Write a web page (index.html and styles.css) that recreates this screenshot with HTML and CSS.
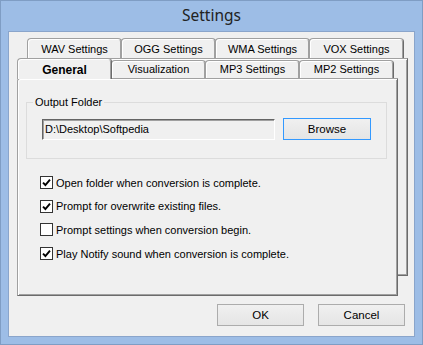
FILE: index.html
```html
<!DOCTYPE html>
<html lang="en">
<head>
  <meta charset="UTF-8">
  <title>Settings</title>
  <link rel="stylesheet" href="styles.css">
</head>
<body>
  <div class="window">
    <div class="titlebar">Settings</div>

    <div class="client">
      <div class="tabrow back">
        <div class="tab">WAV Settings</div>
        <div class="tab">OGG Settings</div>
        <div class="tab">WMA Settings</div>
        <div class="tab">VOX Settings</div>
      </div>
      <div class="tabrow front">
        <div class="tab active">General</div>
        <div class="tab">Visualization</div>
        <div class="tab">MP3 Settings</div>
        <div class="tab">MP2 Settings</div>
      </div>

      <div class="panel">
        <fieldset class="group">
          <legend>Output Folder</legend>
          <div class="pathrow">
            <div class="path">D:\Desktop\Softpedia</div>
            <button class="btn browse">Browse</button>
          </div>
        </fieldset>

        <div class="options">
          <div class="option">
            <span class="check"><svg viewBox="0 0 11 11"><path d="M2 5.6 L4.4 8 L9 2.6"/></svg></span>
            Open folder when conversion is complete.
          </div>
          <div class="option">
            <span class="check"><svg viewBox="0 0 11 11"><path d="M2 5.6 L4.4 8 L9 2.6"/></svg></span>
            Prompt for overwrite existing files.
          </div>
          <div class="option">
            <span class="check"></span>
            Prompt settings when conversion begin.
          </div>
          <div class="option">
            <span class="check"><svg viewBox="0 0 11 11"><path d="M2 5.6 L4.4 8 L9 2.6"/></svg></span>
            Play Notify sound when conversion is complete.
          </div>
        </div>
      </div>

      <div class="actions">
        <button class="btn">OK</button>
        <button class="btn">Cancel</button>
      </div>
    </div>
  </div>
</body>
</html>
```

FILE: styles.css
```css
body {
  margin: 0;
  font-family: 'Liberation Sans', Arial, sans-serif;
  font-size: 11px;
  color: #000;
}

.window {
  width: 423px;
  height: 345px;
  box-sizing: border-box;
  background: #9dbde6;
  border: 1px solid #7f9dc4;
  display: flex;
  flex-direction: column;
}

.titlebar {
  height: 30px;
  line-height: 29px;
  text-align: center;
  font-family: 'Noto Sans', 'Open Sans', sans-serif;
  font-size: 15.5px;
  color: #222;
}

.client {
  flex: 1;
  margin: 0 7px 7px;
  background: #f0f0f0;
  border: 1px solid #8aa5cb;
  position: relative;
  z-index: 0;
}

/* rangee de tabs */
.tabrow {
  display: flex;
}

.tabrow.back {
  margin: 6px 0 0 18px;
}

.tabrow.front {
  margin-left: 8px;
  height: 20px;
}

.tab {
  box-sizing: border-box;
  width: 95px;
  height: 20px;
  margin-left: -1px;
  border: 1px solid #a0a0a0;
  border-bottom: none;
  border-right-color: #6b6b6b;
  border-radius: 4px 4px 0 0;
  background: #f0f0f0;
  box-shadow: inset 1px 1px 0 #fff, inset -1px 0 0 #a0a0a0;
  text-align: center;
  line-height: 20px;
}

.tab:first-child {
  margin-left: 0;
}

.front .tab {
  height: 18px;
  margin-top: 2px;
  line-height: 16px;
}

.front .tab.active {
  height: 21px;
  margin-top: 0;
  line-height: 22px;
  font-size: 12px;
  font-weight: bold;
  position: relative;
  z-index: 1;
}

.panel {
  box-sizing: border-box;
  width: 381px;
  height: 218px;
  margin-left: 8px;
  padding: 16px 0 0 8px;
  border: 1px solid #a0a0a0;
  border-right-color: #6b6b6b;
  border-bottom-color: #6b6b6b;
  border-radius: 3px 0 0 0;
  background: #f0f0f0;
  box-shadow: inset 1px 1px 0 #fff, inset -1px -1px 0 #a0a0a0;
  position: relative;
}

/* pagina de tras */
.panel::before {
  content: "";
  position: absolute;
  left: 9px;
  top: -21px;
  width: 381px;
  height: 218px;
  box-sizing: border-box;
  border: 1px solid #a0a0a0;
  border-right-color: #6b6b6b;
  border-bottom-color: #6b6b6b;
  background: #f0f0f0;
  box-shadow: inset 1px 1px 0 #fff, inset -1px -1px 0 #a0a0a0;
  z-index: -1;
}

.group {
  box-sizing: border-box;
  width: 361px;
  margin: 0;
  padding: 9px 15px 18px;
  border: 1px solid #dcdcdc;
}

.group legend {
  margin-left: -9px;
  padding: 0 2px;
  line-height: 14px;
}

.pathrow {
  display: flex;
  align-items: flex-end;
}

.path {
  box-sizing: border-box;
  width: 233px;
  height: 21px;
  padding-left: 2px;
  line-height: 19px;
  border: 1px solid;
  border-color: #646464 #fff #fff #646464;
  box-shadow: inset 1px 1px 0 #a0a0a0;
}

.btn {
  box-sizing: border-box;
  width: 87px;
  height: 22px;
  padding: 0;
  font-family: inherit;
  font-size: 11.5px;
  color: #000;
  border: 1px solid #acacac;
  background: linear-gradient(#f0f0f0, #e5e5e5);
}

.btn.browse {
  width: 88px;
  margin-left: 8px;
  border-color: #3399ff;
}

.options {
  margin-top: 12px;
}

.option {
  display: flex;
  align-items: center;
  height: 23.6px;
  padding-left: 14px;
}

.check {
  box-sizing: border-box;
  width: 13px;
  height: 13px;
  margin-right: 3px;
  border: 1px solid #333;
  background: #fff;
}

.check svg {
  display: block;
  width: 11px;
  height: 11px;
}

.check path {
  fill: none;
  stroke: #000;
  stroke-width: 1.9;
}

.actions {
  display: flex;
  justify-content: flex-end;
  gap: 14px;
  margin-top: 8px;
  padding-right: 9px;
}
```
